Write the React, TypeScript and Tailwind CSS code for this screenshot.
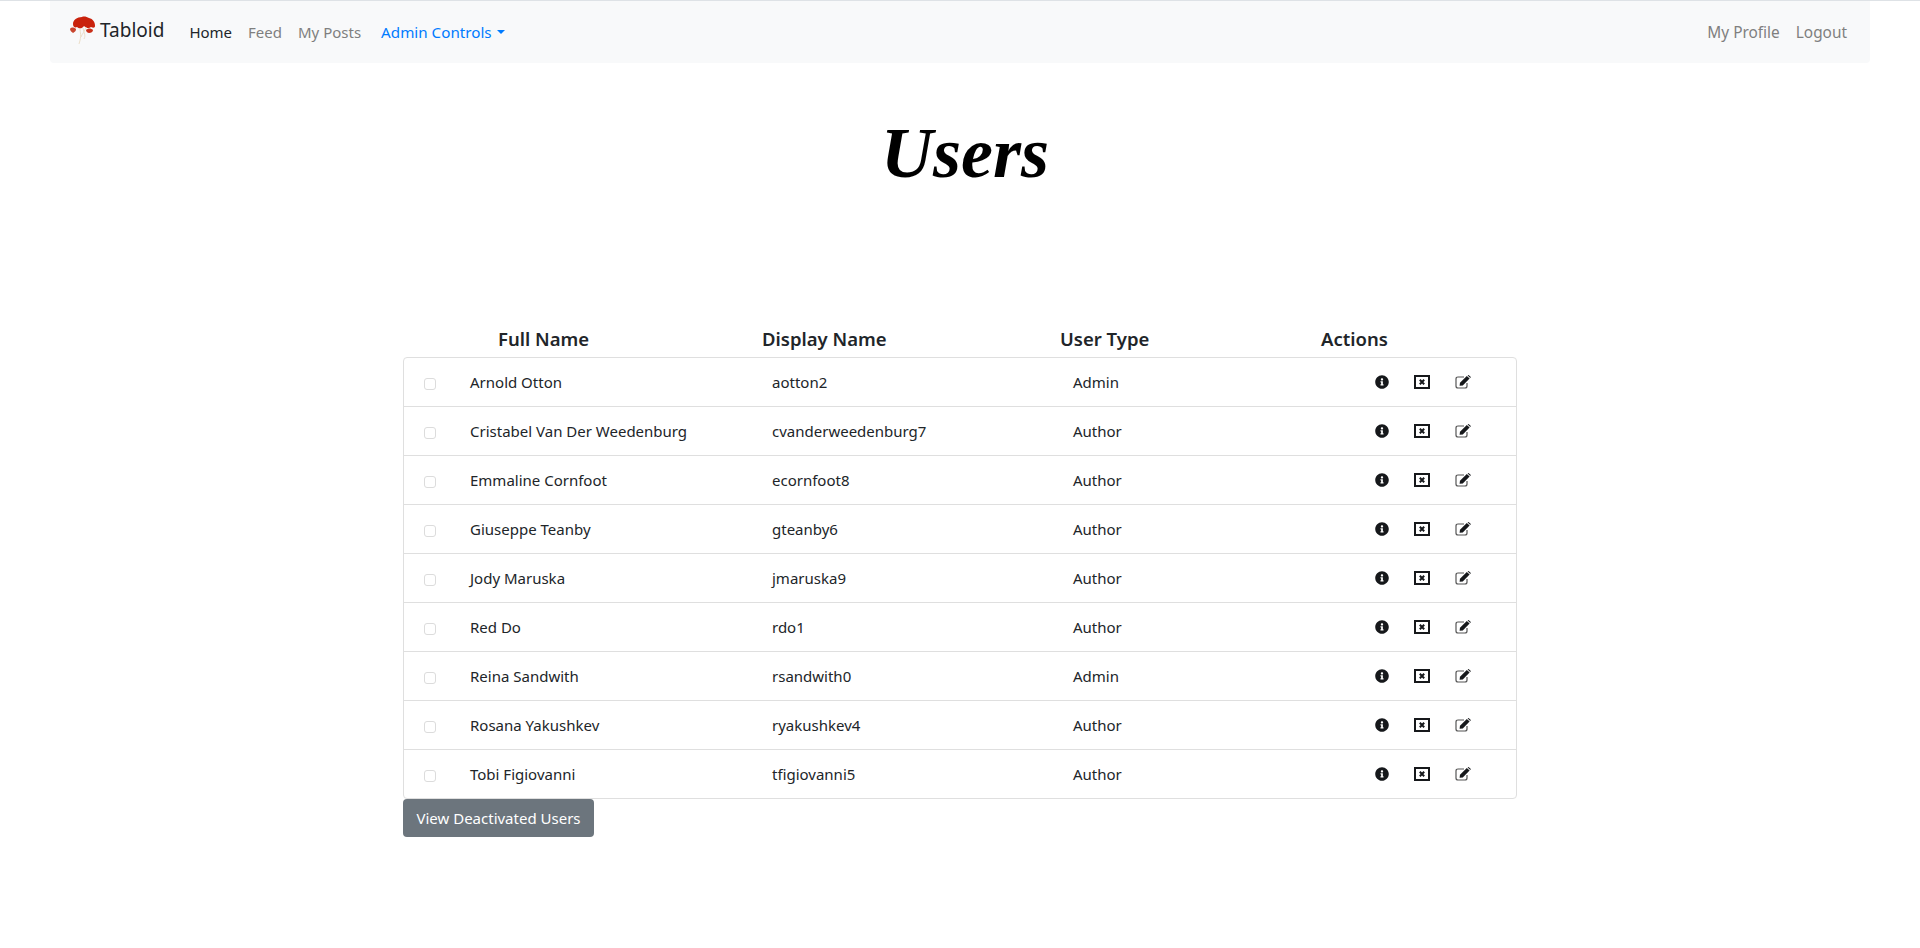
import { FaInfoCircle } from "react-icons/fa";

const users = [
  ["Arnold Otton", "aotton2", "Admin"],
  ["Cristabel Van Der Weedenburg", "cvanderweedenburg7", "Author"],
  ["Emmaline Cornfoot", "ecornfoot8", "Author"],
  ["Giuseppe Teanby", "gteanby6", "Author"],
  ["Jody Maruska", "jmaruska9", "Author"],
  ["Red Do", "rdo1", "Author"],
  ["Reina Sandwith", "rsandwith0", "Admin"],
  ["Rosana Yakushkev", "ryakushkev4", "Author"],
  ["Tobi Figiovanni", "tfigiovanni5", "Author"],
];

function Logo() {
  return (
    <svg width="26" height="30" viewBox="0 0 26 30" className="shrink-0">
      <path d="M3 9 C3 5 7 2 12 2 C14 1 17 2 19 3 C23 4 25 7 25 11 C25 13 23 13 21 12 C19 14 16 13 14 11 C12 14 9 14 7 12 C5 13 3 12 3 9 Z" fill="#c9220c" />
      <path d="M0 14 C1 12 4 12 6 14 C6 17 4 17 3 18 C2 17 0 16 0 14 Z" fill="#c8452f" />
      <path d="M16 15 C18 13 21 13 23 15 C23 17 21 18 19 18 C18 18 16 17 16 15 Z" fill="#c9301a" />
      <path d="M10 13 C10 18 12 20 9 29 M13 13 C14 19 16 20 14 24 M16 12 C15 16 12 19 11 22" stroke="#ecdfc9" strokeWidth="1" fill="none" />
    </svg>
  );
}

function CloseIcon() {
  return (
    <svg width="16" height="14" viewBox="0 0 16 14" className="shrink-0">
      <rect x="1" y="1" width="14" height="12" fill="none" stroke="#16181b" strokeWidth="2" />
      <path d="M5.8 4.8 L10.2 9.2 M10.2 4.8 L5.8 9.2" stroke="#16181b" strokeWidth="2" />
    </svg>
  );
}

function EditIcon() {
  return (
    <svg width="16" height="14" viewBox="0 0 16 14" className="shrink-0">
      <path d="M9 2 H3 Q1 2 1 4 V11 Q1 13 3 13 H10 Q12 13 12 11 V8" fill="none" stroke="#555" strokeWidth="1.2" />
      <path d="M5 7.8 L11.8 1 L14.6 3.6 L7.8 10.4 L4.6 10.8 Z" fill="#16181b" />
      <path d="M12.6 0.4 L13.6 0 L15.8 2 L15.4 3 Z" fill="#16181b" />
    </svg>
  );
}

export default function App() {
  return (
    <div className="min-h-[948px] bg-white border-t border-[#dee2e6] text-[#212529] font-['Noto_Sans',sans-serif]">
      <nav className="mx-[50px] h-[62px] bg-[#f8f9fa] rounded-b flex items-center pl-[20px] pr-[23px] text-[15px]">
        <div className="flex items-center gap-[4px] mr-[25px] -mt-[4px]">
          <Logo />
          <span className="text-[19px] text-[#212529]">Tabloid</span>
        </div>
        <a className="text-[#212529] mr-4">Home</a>
        <a className="text-[#7f7f7f] mr-4">Feed</a>
        <a className="text-[#7f7f7f] mr-5">My Posts</a>
        <a className="text-[#007bff] flex items-center gap-[5px] text-[15.2px]">
          Admin Controls
          <span className="w-0 h-0 border-x-[4.5px] border-x-transparent border-t-[4.5px] border-t-[#007bff]" />
        </a>
        <div className="ml-auto flex gap-4 text-[#7f7f7f] text-[15.4px] mt-[1px]">
          <a>My Profile</a>
          <a>Logout</a>
        </div>
      </nav>
      <h1 className="mt-[45px] h-[90px] pl-[10px] text-center text-[72px] leading-[90px] text-black font-bold italic font-['Liberation_Serif',cursive]">Users</h1>
      <div className="w-[1114px] ml-[403px] mt-[127px]">
        <div className="grid grid-cols-[264px_298px_261px_1fr] pl-[95px] h-[32px] pb-[12px] items-center text-[18.5px] font-semibold">
          <span>Full Name</span>
          <span>Display Name</span>
          <span>User Type</span>
          <span>Actions</span>
        </div>
        <ul className="border border-[#dfdfdf] rounded">
          {users.map((u, i) => (
            <li key={u[0]} className={`flex items-center text-[15px] ${i < 8 ? "h-[49px] border-b border-[#dfdfdf]" : "h-[48px]"}`}>
              <span className="ml-[20px] mr-[34px] w-[12px] h-[12px] mt-[3px] border border-[#dcdcdc] rounded-[3px] shrink-0" />
              <span className="w-[302px]">{u[0]}</span>
              <span className="w-[301px]">{u[1]}</span>
              <span className="w-[302px]">{u[2]}</span>
              <span className="flex items-center gap-[25px] text-[#16181b] -mt-[1px]">
                <FaInfoCircle size={14} />
                <CloseIcon />
                <EditIcon />
              </span>
            </li>
          ))}
        </ul>
        <button className="block h-[38px] w-[191px] bg-[#6c757d] text-white rounded text-[15px]">View Deactivated Users</button>
      </div>
    </div>
  );
}
